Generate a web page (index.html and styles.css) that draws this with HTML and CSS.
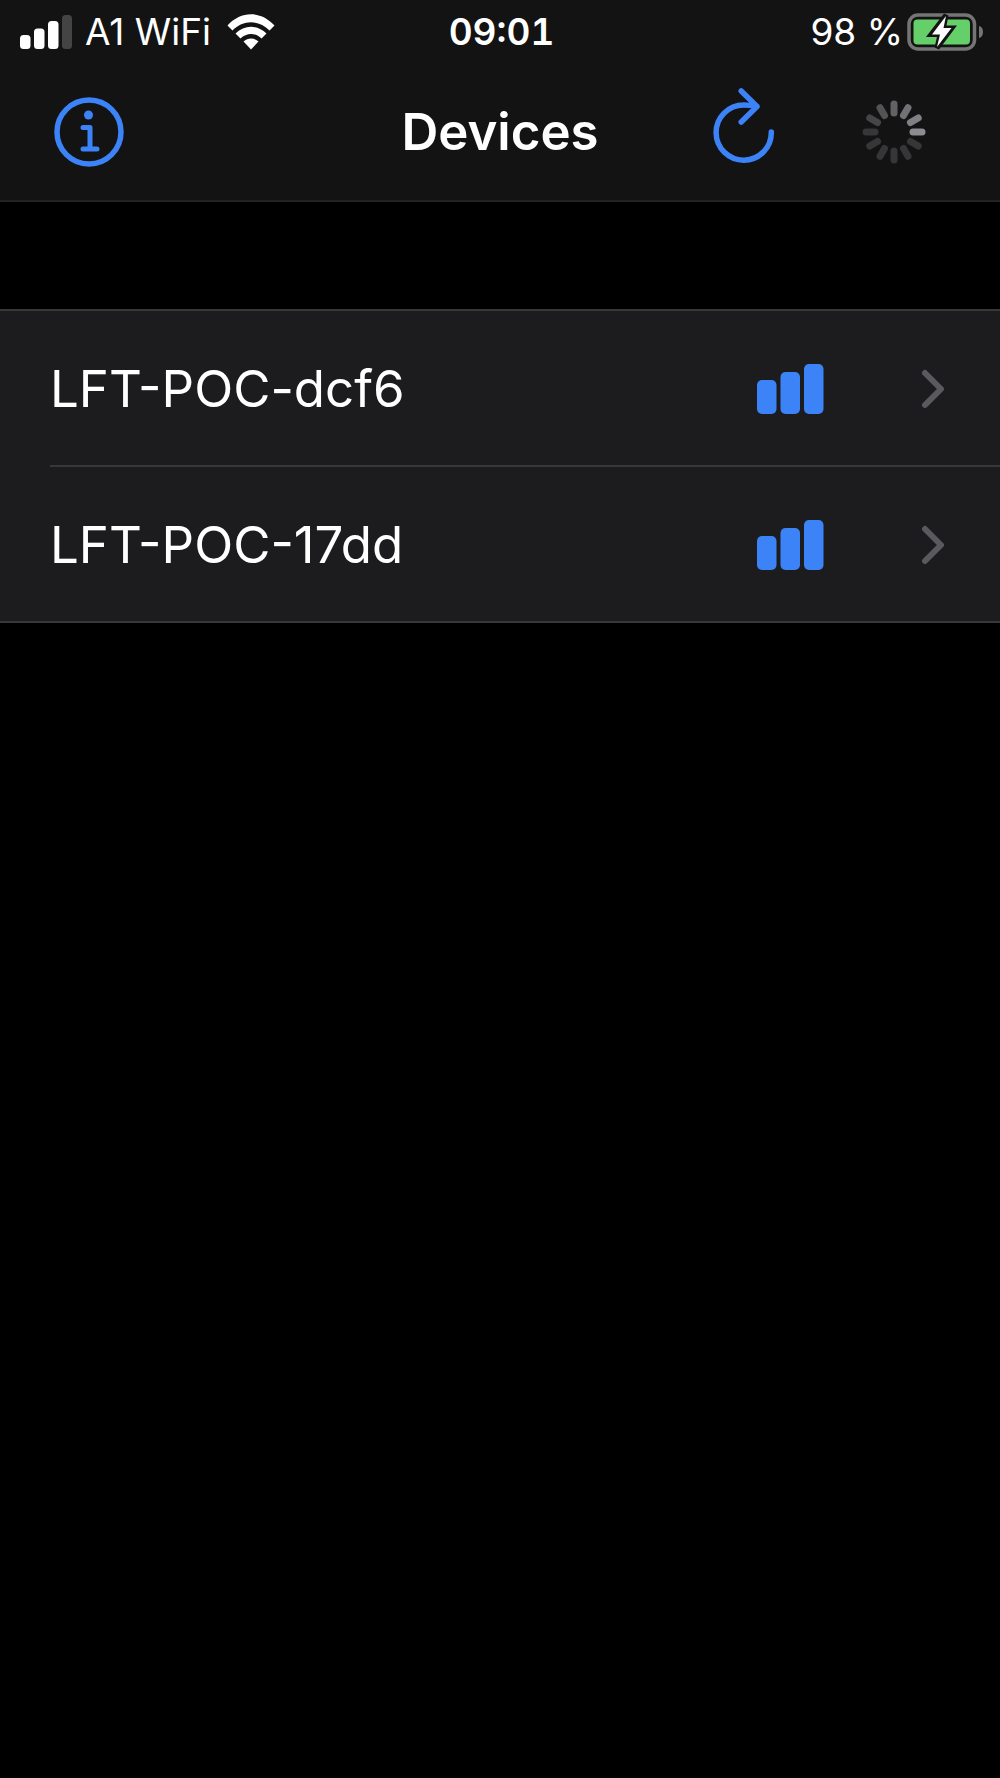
FILE: index.html
```html
<!DOCTYPE html>
<html lang="en">
<head>
<meta charset="utf-8">
<meta name="viewport" content="width=device-width, initial-scale=1">
<title>Devices</title>
<link rel="stylesheet" href="styles.css">
</head>
<body>
<svg width="0" height="0" class="symbols" aria-hidden="true">
  <symbol id="strength" viewBox="0 0 67 50">
    <rect x="0" y="16" width="19.500" height="34" rx="5"/>
    <rect x="23.500" y="8" width="19.500" height="42" rx="5"/>
    <rect x="47" y="0" width="19.500" height="50" rx="5"/>
  </symbol>
  <symbol id="chevron" viewBox="0 0 24 40">
    <path d="M4 4 L20 20 L4 36" fill="none" stroke="currentColor" stroke-width="6" stroke-linecap="round" stroke-linejoin="round"/>
  </symbol>
</svg>
<header class="top">
  <div class="status">
    <div class="status-left">
      <svg class="cell" viewBox="0 0 52 34" width="52" height="34" aria-hidden="true">
        <rect x="0" y="20" width="10.5" height="14" rx="3.5"/>
        <rect x="14" y="13.5" width="10.5" height="20.5" rx="3.5"/>
        <rect x="28" y="6" width="10.5" height="28" rx="3.5"/>
        <rect class="dim" x="42" y="0" width="10" height="34" rx="3.5"/>
      </svg>
      <span class="carrier">A1 WiFi</span>
      <svg class="wifi" viewBox="0 0 48 36" width="48" height="36" aria-hidden="true">
        <path d="M0.5 11.5 C14 -3.5 34 -3.5 47.5 11.5 L42.5 16.5 C32 5.500 16 5.500 5.500 16.5 Z"/>
        <path d="M8.500 19.5 C17.500 10.500 30.500 10.500 39.500 19.5 L34.500 24.500 C28.500 18.500 19.500 18.500 13.500 24.500 Z"/>
        <path d="M16.500 27.500 C21 23.500 27 23.500 31.500 27.500 L24 35.500 Z"/>
      </svg>
    </div>
    <time class="clock">09:01</time>
    <div class="status-right">
      <span>98 %</span>
      <svg viewBox="0 0 76 38" width="76" height="38" aria-hidden="true">
        <rect x="2" y="2" width="65.500" height="34" rx="9" fill="none" stroke="#757575" stroke-width="3.500"/>
        <path d="M72 13 Q76 14 76 19 Q76 24 72 25 Z" fill="#757575"/>
        <rect x="6.500" y="6.500" width="56.500" height="25" rx="4" fill="#65cf6a"/>
        <path d="M39 2 L24 21.500 H33 L30 35 L45 15 H36.500 Z" fill="#131313" stroke="#131313" stroke-width="5"/>
        <path d="M39 3 L25 21.500 H33 L30 34 L44.500 15 H36.500 Z" fill="#fff"/>
      </svg>
    </div>
  </div>
  <nav class="bar">
    <button class="icon-btn info" type="button" aria-label="Information">
      <svg viewBox="0 0 70 70" width="70" height="70" aria-hidden="true">
        <circle cx="35" cy="35" r="32" fill="none" stroke="currentColor" stroke-width="5.500"/>
        <circle cx="34.500" cy="18" r="4.500" fill="currentColor"/>
        <path d="M29 30.500 H36 V52 M29 52 H43" fill="none" stroke="currentColor" stroke-width="5" stroke-linecap="round" stroke-linejoin="round"/>
      </svg>
    </button>
    <h1 class="title">Devices</h1>
    <div class="actions">
      <button class="icon-btn" type="button" aria-label="Refresh">
        <svg class="refresh" viewBox="0 0 62 84" width="62" height="84" aria-hidden="true">
          <path d="M58.300 42 A27.600 27.600 0 1 1 30.700 15 Q37 15 44 16.500 M28.200 1 L44 16.500 L28.200 32" fill="none" stroke="currentColor" stroke-width="5.500" stroke-linecap="round" stroke-linejoin="round"/>
        </svg>
      </button>
      <svg class="spinner" viewBox="-32 -32 64 64" width="64" height="64" role="img" aria-label="Scanning">
        <g stroke-width="7" stroke-linecap="round">
          <path d="M0 -28V-19" stroke="#626265"/>
          <path d="M0 -28V-19" stroke="#727276" transform="rotate(30)"/>
          <path d="M0 -28V-19" stroke="#7f7f84" transform="rotate(60)"/>
          <path d="M0 -28V-19" stroke="#8c8c91" transform="rotate(90)"/>
          <path d="M0 -28V-19" stroke="#363638" transform="rotate(120)"/>
          <path d="M0 -28V-19" stroke="#363638" transform="rotate(150)"/>
          <path d="M0 -28V-19" stroke="#363638" transform="rotate(180)"/>
          <path d="M0 -28V-19" stroke="#363638" transform="rotate(210)"/>
          <path d="M0 -28V-19" stroke="#363638" transform="rotate(240)"/>
          <path d="M0 -28V-19" stroke="#363638" transform="rotate(270)"/>
          <path d="M0 -28V-19" stroke="#454547" transform="rotate(300)"/>
          <path d="M0 -28V-19" stroke="#535356" transform="rotate(330)"/>
        </g>
      </svg>
    </div>
  </nav>
</header>
<main>
  <ul class="devices">
    <li><a class="device" href="#dcf6">
      <span class="name">LFT-POC-dcf6</span>
      <svg class="strength" width="67" height="50" aria-hidden="true"><use href="#strength"/></svg>
      <svg class="chevron" width="24" height="40" aria-hidden="true"><use href="#chevron"/></svg>
    </a></li>
    <li><a class="device" href="#17dd">
      <span class="name">LFT-POC-17dd</span>
      <svg class="strength" width="67" height="50" aria-hidden="true"><use href="#strength"/></svg>
      <svg class="chevron" width="24" height="40" aria-hidden="true"><use href="#chevron"/></svg>
    </a></li>
  </ul>
</main>
</body>
</html>
```
FILE: styles.css
```css
* { box-sizing: border-box; }

body {
  margin: 0;
  min-height: 100vh;
  background: #000;
  color: #fff;
  font-family: Inter, "Liberation Sans", sans-serif;
}

svg { display: block; flex: none; }
.symbols { display: none; }

.top {
  background: #131313;
  border-bottom: 2px solid #222;
}

.status {
  display: grid;
  grid-template-columns: 1fr auto 1fr;
  align-items: center;
  height: 64px;
  padding: 0 17px 0 20px;
  font-size: 37px;
  line-height: 44px;
}

.status-left, .status-right { display: flex; align-items: center; white-space: nowrap; }
.status-left { gap: 13px; fill: #fff; }
.carrier { margin-right: 3px; }
.status-right { gap: 4px; justify-content: flex-end; }
.dim { fill: #444; }
.clock { font-weight: 600; font-variant-numeric: tabular-nums; }

.bar {
  display: grid;
  grid-template-columns: 1fr auto 1fr;
  align-items: center;
  height: 136px;
  padding: 0 54px;
}

.icon-btn {
  padding: 0;
  border: 0;
  background: none;
  color: #3c83f7;
  cursor: pointer;
}
.info { justify-self: start; }
.refresh { overflow: visible; }

.title {
  margin: 0;
  font-size: 51px;
  font-weight: 600;
  line-height: 64px;
}

.actions {
  display: flex;
  align-items: center;
  justify-content: flex-end;
  gap: 87px;
  padding-right: 20px;
}

.devices {
  margin: 107px 0 0;
  padding: 0;
  list-style: none;
  background: #1c1c1e;
  border-top: 2px solid #38383a;
  border-bottom: 2px solid #38383a;
}

.devices li + li::before {
  content: "";
  display: block;
  height: 2px;
  margin-left: 50px;
  background: #38383a;
}

.device {
  display: flex;
  align-items: center;
  height: 154px;
  padding: 2px 55px 0 50px;
  color: inherit;
  text-decoration: none;
}

.name { flex: 1; font-size: 51px; line-height: 64px; }
.strength { fill: #3c83f7; margin-right: 97px; }
.chevron { color: #5a5a5e; }
```
